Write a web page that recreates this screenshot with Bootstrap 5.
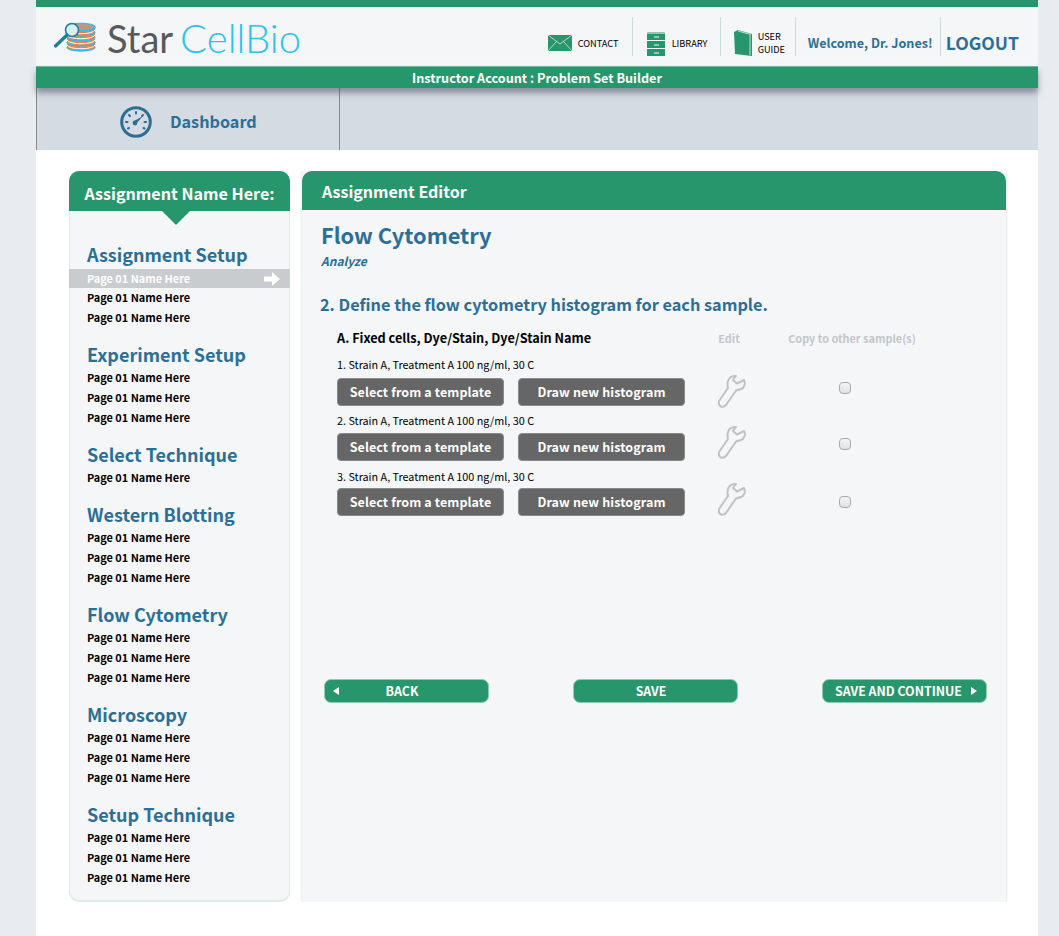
<!DOCTYPE html>
<html lang="en"><head><meta charset="utf-8"><title>StarCellBio</title>
<link rel="stylesheet" href="https://cdn.jsdelivr.net/npm/bootstrap@5.3.0/dist/css/bootstrap.min.css">
<style>
:root{--grn:#28966c;--blu:#2b6f97;}
html,body{height:936px;overflow:hidden}
body{background:#e8ecf1;font-family:"Noto Sans CJK JP","Noto Sans",sans-serif;color:#000}
.shell{width:1002px;height:936px;margin-left:36px;background:#fff;display:flex;flex-direction:column}
.topline{height:7px;background:var(--grn)}
.hdr{height:59px;background:#f4f6f8;padding:10px 19px 0 16px;position:relative}
.logo-ic{margin-top:5px}
.logo-t{font-family:Lato,sans-serif;font-size:38px;line-height:40px;margin-left:9px;color:#58595b;margin-top:1px;white-space:nowrap}
.logo-t span{color:#2ac1ef;margin-left:7px;font-weight:300;font-size:40px}
.hlink{height:39px;display:flex;align-items:center;font-size:9.2px;line-height:13px;color:#000;text-decoration:none;padding-top:13px;border-right:1px solid #c9dbd6}
.hlink svg{flex-shrink:0}
.welcome{font-size:12.6px;font-weight:700;color:var(--blu);line-height:20px;padding-left:12px;padding-top:12px;width:145px;white-space:nowrap}
.logout{font-size:17.6px;font-weight:700;color:var(--blu);line-height:26px;padding-left:5px;padding-top:13px;white-space:nowrap}
.subbar{height:22px;background:var(--grn);color:#fff;font-weight:700;font-size:12.65px;line-height:21px;text-align:center;box-shadow:0 5px 6px rgba(60,70,90,.5);position:relative;border-top:1px solid #6db89c}
.tabs{height:62px;background:#d5dbe3;display:flex}
.tab-d{width:304px;border-left:1px solid #888;border-right:1px solid #888;display:flex;align-items:center;gap:18px;padding:5px 0 0 83px;color:var(--blu);font-size:16.2px;font-weight:700}
.work{flex:1;display:flex;align-items:flex-start;gap:12px;padding:21px 32px 0 33px}
.side{width:221px;height:730px;background:#f4f6f8;border:1px solid #dcedea;border-top:0;border-radius:10px;box-shadow:0 1px 0 #dcedea}
.side-h{height:40px;background:var(--grn);color:#fff;font-size:16.1px;font-weight:700;text-align:center;line-height:45px;border-radius:10px 10px 0 0;margin:0 -1px;position:relative;white-space:nowrap}
.side-h::after{content:"";position:absolute;left:93px;top:40px;border:14px solid transparent;border-top-color:var(--grn);border-bottom:0}
.side-b{padding-top:31px}
.sect{margin-bottom:14px}
.sect h5{font-size:18px;line-height:24px;font-weight:700;color:var(--blu);margin:0 0 2px;padding-left:17px}
.pg{font-size:10.9px;line-height:18px;height:20px;font-weight:700;padding-left:17px;color:#000;position:relative}
.pg.on{color:#fff;background:#c8ccce;height:19px;line-height:18px;margin:3px -1px 0;padding-left:18px}
.pg.on svg{position:absolute;right:10px;top:3px}
.panel{width:704px;height:731px;background:#f4f6f8;box-shadow:1px 0 2px #e4e6e8,-1px 0 2px #eceef0;clip-path:inset(0 -4px 0 -4px);display:flex;flex-direction:column}
.panel-h{height:39px;background:var(--grn);color:#fff;font-weight:700;font-size:16px;line-height:41px;padding-left:20px;border-radius:10px 10px 0 0}
.panel-b{padding:10px 0 0 19px;flex:1}
.t1{font-size:21.8px;font-weight:700;color:var(--blu);line-height:30px;margin:0}
.t2{font-size:12px;font-weight:700;font-style:italic;color:var(--blu);line-height:20px;margin-top:1px}
.t3{font-size:16.3px;font-weight:700;color:var(--blu);line-height:24px;margin:21px 0 0 -1px}
.tbl{margin:12px 0 0 16px;width:600px}
.trow{display:flex;align-items:center;height:28px}
.trow.hd{height:20px}
.lbl{font-size:12.7px;font-weight:700;line-height:20px;width:350px;white-space:nowrap}
.gh{font-size:10.9px;font-weight:700;color:#c4c6c8;line-height:20px;text-align:center;white-space:nowrap}
.gh.e{width:84px}.gh.c{width:162px}
.smp{font-size:10.8px;line-height:18px}
.s1{margin:7px 0 5px}.s2{margin:5px 0 4px}.s3{margin:6px 0 3px}
.btn-g{width:167px;height:28px;background:#666;border:1px solid #8a8a8a;border-radius:4px;color:#fff;font-weight:700;font-size:12.5px;line-height:26px;padding:0;letter-spacing:.1px}
.btn-g:hover{background:#666;color:#fff}
.btns{display:flex;gap:14px;width:348px}
.cellw{width:93px;display:flex;justify-content:center}
.cellc{width:134px;display:flex;justify-content:center}
.cb{width:12px;height:12px;margin:0;border:1px solid #aaa;border-radius:3px;background:linear-gradient(#f4f4f4,#e2e2e2)}
.foot{display:flex;justify-content:space-between;margin:163px 19px 0 3px}
.btn-n{width:165px;height:24px;background:var(--grn);border:1px solid #8fcbb3;border-radius:7px;color:#fff;font-size:12.4px;font-weight:700;line-height:22px;padding:0 9px 0 0;position:relative}
.btn-n.sc{padding-right:12px}
.btn-n:hover{background:var(--grn);color:#fff}
.ar{position:absolute;top:7px;border:4px solid transparent}
.ar.l{left:8px;border-right:6px solid #fff;border-left:0}
.ar.r{right:9px;border-left:6px solid #fff;border-right:0}
</style></head><body>
<svg width="0" height="0" class="position-absolute"><defs><symbol id="wr" viewBox="0 0 28 33"><path d="M1 26 10 13C9 9 9 5 13 2Q15 1 18 1L15 5 19 8.500 26 5C28 9 26 13 23 14Q20 15 18 15.500L8 30Q5.500 32.500 3 31.500 0 30 1 26Z" fill="none" stroke="#c0c2c4" stroke-width="2" stroke-linejoin="round"/></symbol></defs></svg>
<div class="shell">
 <div class="topline"></div>
 <div class="hdr d-flex justify-content-between">
  <div class="d-flex align-items-start">
   <svg class="logo-ic" width="46" height="30" viewBox="0 0 46 30">
    <path d="M15 5v20c0 5 28 5 28 0V5z" fill="#f3833f"/>
    <g fill="none" stroke="#3fb6e8" stroke-width="1.800"><path d="M15 5c0 5 28 5 28 0"/><path d="M15 10c2 5 26 5 28 0"/><path d="M15 15c2 5 26 5 28 0"/><path d="M15 20c2 5 26 5 28 0"/><path d="M15 25c2 5 26 5 28 0"/></g>
    <g fill="none" stroke="#fff" stroke-width="1"><path d="M15 8c2 5 26 5 28 0M15 13c2 5 26 5 28 0M15 18c2 5 26 5 28 0M15 23c2 5 26 5 28 0"/></g>
    <ellipse cx="29" cy="5" rx="14" ry="3.600" fill="#c09a78" stroke="#3fb6e8" stroke-width="1.200"/>
    <circle cx="20" cy="8" r="6.500" fill="#d8eef5" stroke="#1c7f9c" stroke-width="1.600"/>
    <path d="M15 13 3.500 24" stroke="#1c7f9c" stroke-width="3.200" stroke-linecap="round"/>
   </svg>
   <div class="logo-t">Star<span>CellBio</span></div>
  </div>
  <div class="d-flex align-items-start">
   <div class="hlink" style="width:85px"><svg width="24" height="16" viewBox="0 0 24 16" style="margin-right:6px"><rect width="24" height="16" fill="#28966c"/><path d="M0 0l12 9L24 0M0 16l8.500-9.500M24 16l-8.500-9.500" fill="none" stroke="#cfe8dd" stroke-width=".8"/></svg>CONTACT</div>
   <div class="hlink" style="width:88px;padding-left:13px"><svg width="20" height="26" viewBox="0 0 20 26" style="margin-right:6px"><path d="M1 3q0-1 1-1h16q1 0 1 1v23H1z" fill="#28966c"/><path d="M0 3h20M0 10.500h20M0 18.500h20" stroke="#f4f6f8" stroke-width="1"/><path d="M8 7h5M8 15h5M8 23h5" stroke="#fff" stroke-width="1"/></svg>LIBRARY</div>
   <div class="hlink" style="width:75px;padding-left:13px"><svg width="18" height="26" viewBox="0 0 18 26" style="margin-right:6px"><path d="M0 2l4-2 14 4v22L1 24z" fill="#28966c"/><path d="M4 1l13 3.500M16 5v20" stroke="#bfe0d2" fill="none" stroke-width="1"/></svg><span>USER<br>GUIDE</span></div>
   <div class="hlink welcome">Welcome, Dr. Jones!</div>
   <div class="logout">LOGOUT</div>
  </div>
 </div>
 <div class="subbar">Instructor Account : Problem Set Builder</div>
 <div class="tabs">
  <div class="tab-d">
   <svg width="32" height="32" viewBox="0 0 32 32"><circle cx="16" cy="16" r="14.300" fill="none" stroke="#2b6f97" stroke-width="3"/><g stroke="#2b6f97" stroke-width="2" stroke-linecap="round"><path d="M16 6v1.500M9 9l1 1M6 16h1.500M8 22.500l1-.5M24.500 22.500l-1-.5M26 16h-1.500M23 9l-1 1"/></g><path d="M14 15l9-5-7 8z" fill="#2b6f97"/><circle cx="15" cy="17" r="2.400" fill="#2b6f97"/></svg>
   <span>Dashboard</span>
  </div>
 </div>
 <div class="work">
  <aside class="side">
   <div class="side-h">Assignment Name Here:</div>
   <div class="side-b">
    <div class="sect"><h5>Assignment Setup</h5><div class="pg on">Page 01 Name Here<svg width="16" height="14" viewBox="0 0 16 14"><path d="M0 4.500h8V0l8 7-8 7V9.500H0z" fill="#fff"/></svg></div><div class="pg">Page 01 Name Here</div><div class="pg">Page 01 Name Here</div></div>
    <div class="sect"><h5>Experiment Setup</h5><div class="pg">Page 01 Name Here</div><div class="pg">Page 01 Name Here</div><div class="pg">Page 01 Name Here</div></div>
    <div class="sect"><h5>Select Technique</h5><div class="pg">Page 01 Name Here</div></div>
    <div class="sect"><h5>Western Blotting</h5><div class="pg">Page 01 Name Here</div><div class="pg">Page 01 Name Here</div><div class="pg">Page 01 Name Here</div></div>
    <div class="sect"><h5>Flow Cytometry</h5><div class="pg">Page 01 Name Here</div><div class="pg">Page 01 Name Here</div><div class="pg">Page 01 Name Here</div></div>
    <div class="sect"><h5>Microscopy</h5><div class="pg">Page 01 Name Here</div><div class="pg">Page 01 Name Here</div><div class="pg">Page 01 Name Here</div></div>
    <div class="sect"><h5>Setup Technique</h5><div class="pg">Page 01 Name Here</div><div class="pg">Page 01 Name Here</div><div class="pg">Page 01 Name Here</div></div>
   </div>
  </aside>
  <main class="panel">
   <div class="panel-h">Assignment Editor</div>
   <div class="panel-b">
    <h1 class="t1">Flow Cytometry</h1>
    <div class="t2">Analyze</div>
    <h2 class="t3">2. Define the flow cytometry histogram for each sample.</h2>
    <div class="tbl">
     <div class="trow hd"><div class="lbl">A. Fixed cells, Dye/Stain, Dye/Stain Name</div><div class="gh e">Edit</div><div class="gh c">Copy to other sample(s)</div></div>
     <div class="smp s1">1. Strain A, Treatment A 100 ng/ml, 30 C</div>
     <div class="trow"><div class="btns"><button class="btn btn-g">Select from a template</button><button class="btn btn-g">Draw new histogram</button></div><div class="cellw"><svg width="28" height="33" style="margin-top:-2px"><use href="#wr"/></svg></div><div class="cellc"><input class="cb form-check-input" style="margin-top:-8px" type="checkbox" aria-label="Copy"></div></div>
     <div class="smp s2">2. Strain A, Treatment A 100 ng/ml, 30 C</div>
     <div class="trow"><div class="btns"><button class="btn btn-g">Select from a template</button><button class="btn btn-g">Draw new histogram</button></div><div class="cellw"><svg width="28" height="33" style="margin-top:-10px"><use href="#wr"/></svg></div><div class="cellc"><input class="cb form-check-input" style="margin-top:-6px" type="checkbox" aria-label="Copy"></div></div>
     <div class="smp s3">3. Strain A, Treatment A 100 ng/ml, 30 C</div>
     <div class="trow"><div class="btns"><button class="btn btn-g">Select from a template</button><button class="btn btn-g">Draw new histogram</button></div><div class="cellw"><svg width="28" height="33" style="margin-top:-6px"><use href="#wr"/></svg></div><div class="cellc"><input class="cb form-check-input" type="checkbox" aria-label="Copy"></div></div>
    </div>
    <div class="foot">
     <button class="btn btn-n"><i class="ar l"></i>BACK</button>
     <button class="btn btn-n">SAVE</button>
     <button class="btn btn-n sc">SAVE AND CONTINUE<i class="ar r"></i></button>
    </div>
   </div>
  </main>
 </div>
</div>
<script src="https://cdn.jsdelivr.net/npm/bootstrap@5.3.0/dist/js/bootstrap.bundle.min.js"></script>
</body></html>
